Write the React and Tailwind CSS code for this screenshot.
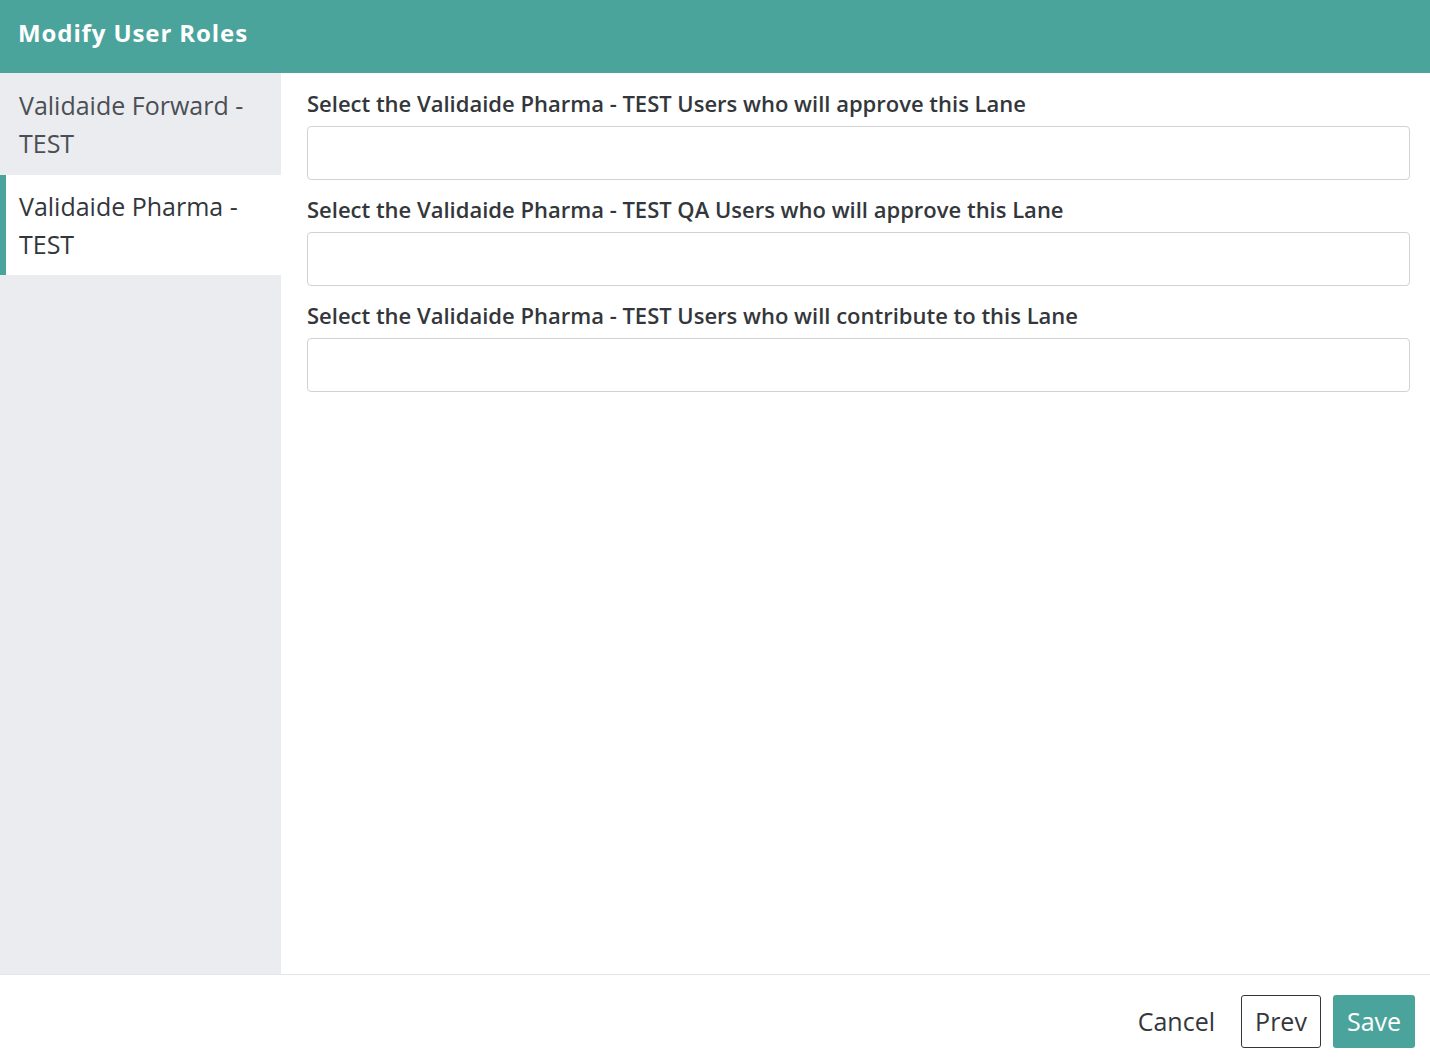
import React from "react";

const labels = [
  "Select the Validaide Pharma - TEST Users who will approve this Lane",
  "Select the Validaide Pharma - TEST QA Users who will approve this Lane",
  "Select the Validaide Pharma - TEST Users who will contribute to this Lane",
];

export default function App() {
  return (
    <div className="h-[1060px] w-[1430px] flex flex-col bg-white text-[#33373b]" style={{ fontFamily: '"Open Sans", "Noto Sans", sans-serif' }}>
      <div className="h-[73px] shrink-0 bg-[#4ba49c] flex items-center pl-[18px] pb-[8px]">
        <h1 className="text-white text-[24px] font-bold tracking-[0.9px]" style={{ fontFamily: '"Open Sans", sans-serif' }}>
          Modify User Roles
        </h1>
      </div>
      <div className="flex flex-1 min-h-0">
        <div className="w-[281px] shrink-0 bg-[#ebecf0]">
          <div className="px-[19px] py-[13px] text-[25px] leading-[38px] text-[#4a4f55]">
            Validaide Forward - TEST
          </div>
          <div className="bg-white border-l-[6px] border-[#4ba49c] pl-[13px] pr-[19px] py-[12px] text-[25px] leading-[38px] text-[#33373b]">
            Validaide Pharma - TEST
          </div>
        </div>
        <div className="flex-1 pl-[26px] pr-[20px] pt-[17px]">
          {labels.map((l) => (
            <div key={l} className="mb-4">
              <div className="text-[22px] leading-[27px] font-semibold text-[#33373b] mb-[9px]">{l}</div>
              <div className="h-[54px] border border-[#cfd2d6] rounded-[4px] bg-white" />
            </div>
          ))}
        </div>
      </div>
      <div className="h-[86px] shrink-0 border-t border-[#e4e5ea] flex items-center justify-end gap-3 pr-[15px] pt-[8px]">
        <button className="h-[53px] px-[14px] text-[25px] text-[#33373b]">Cancel</button>
        <button className="h-[53px] w-[80px] border border-[#33373b] rounded-[3px] text-[25px] text-[#33373b]">Prev</button>
        <button className="h-[53px] w-[82px] bg-[#4ba49c] rounded-[3px] text-[25px] text-white">Save</button>
      </div>
    </div>
  );
}
